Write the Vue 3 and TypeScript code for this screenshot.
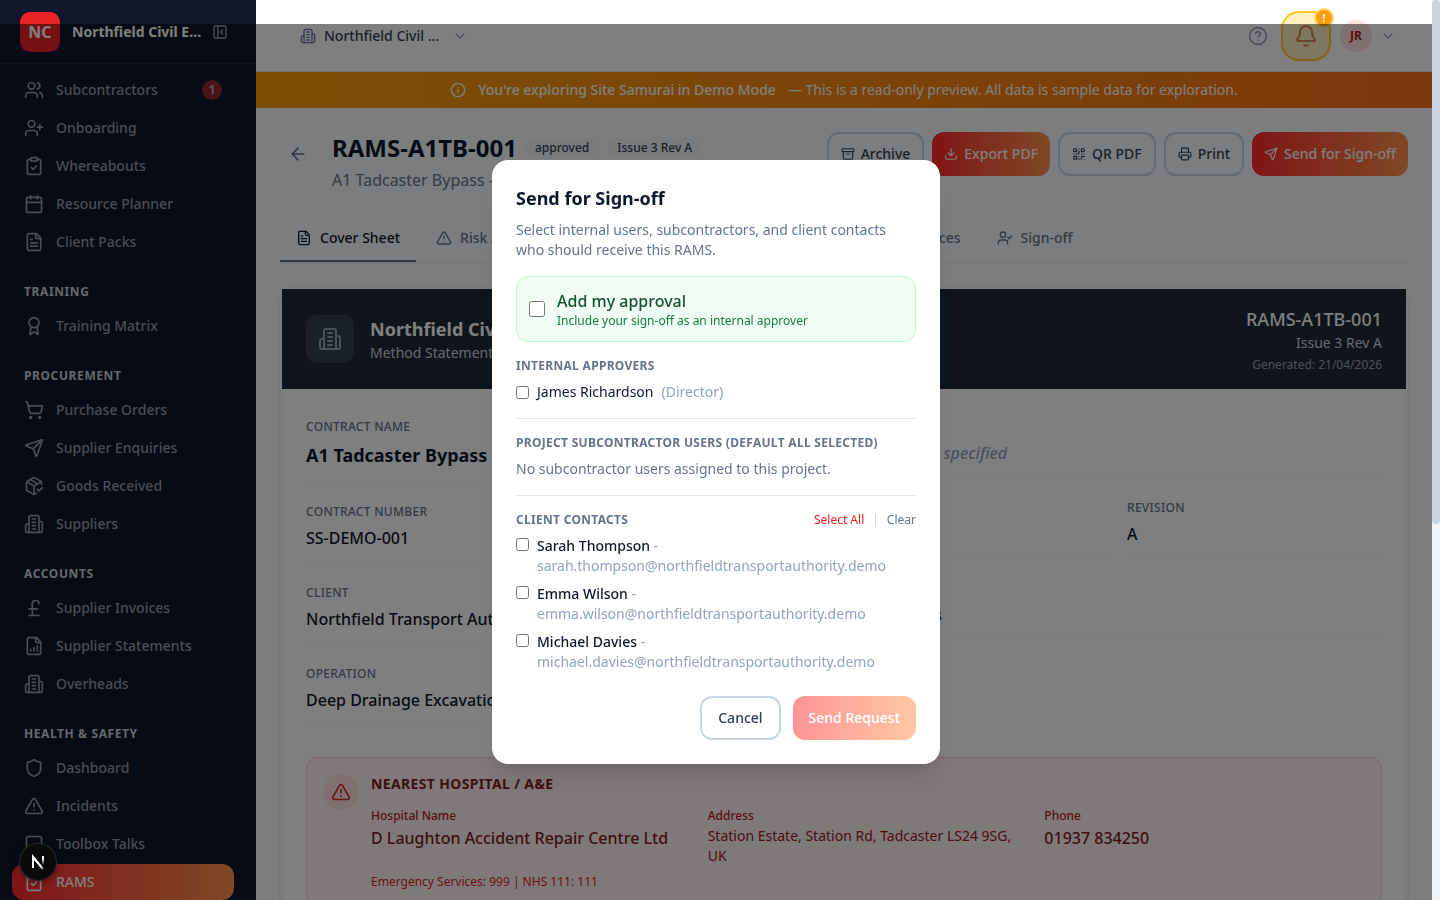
<script setup lang="ts">
import { ref } from 'vue'

const file = '<path d="M15 2H6a2 2 0 0 0-2 2v16a2 2 0 0 0 2 2h12a2 2 0 0 0 2-2V7Z"/><path d="M14 2v4a2 2 0 0 0 2 2h4"/>'
const person = '<path d="M16 21v-2a4 4 0 0 0-4-4H6a4 4 0 0 0-4 4v2"/><circle cx="9" cy="7" r="4"/>'

const icons: Record<string, string> = {
  users: person + '<path d="M22 21v-2a4 4 0 0 0-3-3.87"/><path d="M16 3.13a4 4 0 0 1 0 7.75"/>',
  userPlus: person + '<path d="M19 8v6M22 11h-6"/>',
  userCheck: person + '<path d="m16 11 2 2 4-4"/>',
  clipboard: '<rect x="8" y="2" width="8" height="4" rx="1"/><path d="M16 4h2a2 2 0 0 1 2 2v14a2 2 0 0 1-2 2H6a2 2 0 0 1-2-2V6a2 2 0 0 1 2-2h2"/><path d="m9 14 2 2 4-4"/>',
  calendar: '<path d="M8 2v4M16 2v4"/><rect x="3" y="4" width="18" height="18" rx="2"/><path d="M3 10h18"/>',
  fileText: file + '<path d="M10 9H8M16 13H8M16 17H8"/>',
  fileChart: file + '<path d="M8 18v-2M12 18v-4M16 18v-6"/>',
  award: '<path d="m15.477 12.89 1.515 8.526a.5.5 0 0 1-.81.47l-3.58-2.687a1 1 0 0 0-1.197 0l-3.586 2.686a.5.5 0 0 1-.81-.469l1.514-8.526"/><circle cx="12" cy="8" r="6"/>',
  cart: '<circle cx="8" cy="21" r="1"/><circle cx="19" cy="21" r="1"/><path d="M2.05 2.05h2l2.66 12.42a2 2 0 0 0 2 1.58h9.78a2 2 0 0 0 1.95-1.57l1.65-7.43H5.12"/>',
  send: '<path d="M14.536 21.686a.5.5 0 0 0 .937-.024l6.5-19a.496.496 0 0 0-.635-.635l-19 6.5a.5.5 0 0 0-.024.937l7.93 3.18a2 2 0 0 1 1.112 1.11z"/><path d="m21.854 2.147-10.94 10.939"/>',
  package: '<path d="m16 16 2 2 4-4"/><path d="M21 10V8a2 2 0 0 0-1-1.73l-7-4a2 2 0 0 0-2 0l-7 4A2 2 0 0 0 3 8v8a2 2 0 0 0 1 1.73l7 4a2 2 0 0 0 2 0l2-1.14"/><path d="m7.5 4.27 9 5.15"/><path d="M3.29 7 12 12l8.71-5M12 22V12"/>',
  building: '<path d="M6 22V4a2 2 0 0 1 2-2h8a2 2 0 0 1 2 2v18Z"/><path d="M6 12H4a2 2 0 0 0-2 2v6a2 2 0 0 0 2 2h2"/><path d="M18 9h2a2 2 0 0 1 2 2v9a2 2 0 0 1-2 2h-2"/><path d="M10 6h4M10 10h4M10 14h4M10 18h4"/>',
  pound: '<path d="M18 7c0-5.333-8-5.333-8 0"/><path d="M10 7v14M6 21h12M6 13h10"/>',
  shield: '<path d="M20 13c0 5-3.5 7.5-7.66 8.95a1 1 0 0 1-.67-.01C7.5 20.5 4 18 4 13V6a1 1 0 0 1 1-1c2 0 4.5-1.2 6.24-2.72a1.17 1.17 0 0 1 1.52 0C14.51 3.81 17 5 19 5a1 1 0 0 1 1 1z"/>',
  alert: '<path d="m21.73 18-8-14a2 2 0 0 0-3.48 0l-8 14A2 2 0 0 0 4 21h16a2 2 0 0 0 1.73-3"/><path d="M12 9v4M12 17h.01"/>',
  message: '<path d="M21 15a2 2 0 0 1-2 2H7l-4 4V5a2 2 0 0 1 2-2h14a2 2 0 0 1 2 2z"/>',
  panel: '<rect x="3" y="3" width="18" height="18" rx="2"/><path d="M9 3v18M16 15l-3-3 3-3"/>',
  chevron: '<path d="m6 9 6 6 6-6"/>',
  help: '<circle cx="12" cy="12" r="10"/><path d="M9.09 9a3 3 0 0 1 5.83 1c0 2-3 3-3 3M12 17h.01"/>',
  bell: '<path d="M10.268 21a2 2 0 0 0 3.464 0"/><path d="M3.262 15.326A1 1 0 0 0 4 17h16a1 1 0 0 0 .74-1.673C19.41 13.956 18 12.499 18 8A6 6 0 0 0 6 8c0 4.499-1.411 5.956-2.738 7.326"/>',
  info: '<circle cx="12" cy="12" r="10"/><path d="M12 16v-4M12 8h.01"/>',
  back: '<path d="m12 19-7-7 7-7M19 12H5"/>',
  archive: '<rect x="2" y="3" width="20" height="5" rx="1"/><path d="M4 8v11a2 2 0 0 0 2 2h12a2 2 0 0 0 2-2V8M10 12h4"/>',
  download: '<path d="M21 15v4a2 2 0 0 1-2 2H5a2 2 0 0 1-2-2v-4M7 10l5 5 5-5M12 15V3"/>',
  qr: '<rect x="3" y="3" width="5" height="5" rx="1"/><rect x="16" y="3" width="5" height="5" rx="1"/><rect x="3" y="16" width="5" height="5" rx="1"/><path d="M21 16h-3a2 2 0 0 0-2 2v3M21 21v.01M12 7v3a2 2 0 0 1-2 2H7M3 12h.01M12 3h.01M12 16v.01M16 12h1M21 12v.01M12 21v-1"/>',
  printer: '<path d="M6 18H4a2 2 0 0 1-2-2v-5a2 2 0 0 1 2-2h16a2 2 0 0 1 2 2v5a2 2 0 0 1-2 2h-2"/><path d="M6 9V3a1 1 0 0 1 1-1h10a1 1 0 0 1 1 1v6"/><rect x="6" y="14" width="12" height="8" rx="1"/>',
}

interface NavItem { label: string; icon: string; count?: number; active?: boolean }
interface NavGroup { title?: string; items: NavItem[] }

const groups: NavGroup[] = [
  {
    items: [
      { label: 'Subcontractors', icon: 'users', count: 1 },
      { label: 'Onboarding', icon: 'userPlus' },
      { label: 'Whereabouts', icon: 'clipboard' },
      { label: 'Resource Planner', icon: 'calendar' },
      { label: 'Client Packs', icon: 'fileText' },
    ],
  },
  { title: 'Training', items: [{ label: 'Training Matrix', icon: 'award' }] },
  {
    title: 'Procurement',
    items: [
      { label: 'Purchase Orders', icon: 'cart' },
      { label: 'Supplier Enquiries', icon: 'send' },
      { label: 'Goods Received', icon: 'package' },
      { label: 'Suppliers', icon: 'building' },
    ],
  },
  {
    title: 'Accounts',
    items: [
      { label: 'Supplier Invoices', icon: 'pound' },
      { label: 'Supplier Statements', icon: 'fileChart' },
      { label: 'Overheads', icon: 'building' },
    ],
  },
  {
    title: 'Health & Safety',
    items: [
      { label: 'Dashboard', icon: 'shield' },
      { label: 'Incidents', icon: 'alert' },
      { label: 'Toolbox Talks', icon: 'message' },
      { label: 'RAMS', icon: 'clipboard', active: true },
    ],
  },
]

const actions = [
  { label: 'Archive', icon: 'archive', primary: false },
  { label: 'Export PDF', icon: 'download', primary: true },
  { label: 'QR PDF', icon: 'qr', primary: false },
  { label: 'Print', icon: 'printer', primary: false },
  { label: 'Send for Sign-off', icon: 'send', primary: true },
]

const tabs = [
  { label: 'Cover Sheet', icon: 'fileText', active: true },
  { label: 'Risk Assessments', icon: 'alert' },
  { label: 'Method', icon: 'clipboard' },
  { label: 'Equipment', icon: 'fileChart' },
  { label: 'Appendices', icon: 'fileText' },
  { label: 'Sign-off', icon: 'userCheck' },
]

const contacts = ref([
  { name: 'Sarah Thompson', email: 'sarah.thompson@northfieldtransportauthority.demo', picked: false },
  { name: 'Emma Wilson', email: 'emma.wilson@northfieldtransportauthority.demo', picked: false },
  { name: 'Michael Davies', email: 'michael.davies@northfieldtransportauthority.demo', picked: false },
])
const addApproval = ref(false)
const director = ref(false)

function pickAll(value: boolean) {
  contacts.value.forEach((c) => { c.picked = value })
}
</script>

<template>
  <div class="shell">
    <aside class="sidebar">
      <div class="brand">
        <span class="brand-logo">NC</span>
        <span class="brand-name">Northfield Civil Engineering</span>
        <button class="plain" aria-label="Collapse sidebar">
          <svg class="icon i16 slate" viewBox="0 0 24 24" v-html="icons.panel" />
        </button>
      </div>
      <nav class="nav">
        <section v-for="(group, i) in groups" :key="i" class="nav-group">
          <h2 v-if="group.title" class="nav-title">{{ group.title }}</h2>
          <a v-for="item in group.items" :key="item.label" href="#" class="nav-item" :class="{ active: item.active }">
            <svg class="icon i20" viewBox="0 0 24 24" v-html="icons[item.icon]" />
            <span>{{ item.label }}</span>
            <span v-if="item.count" class="nav-count">{{ item.count }}</span>
          </a>
        </section>
      </nav>
    </aside>

    <div class="page">
      <header class="topbar">
        <button class="plain company">
          <svg class="icon i16 muted" viewBox="0 0 24 24" v-html="icons.building" />
          <span class="company-name">Northfield Civil Engineering</span>
          <svg class="icon i16 faint" viewBox="0 0 24 24" v-html="icons.chevron" />
        </button>
        <div class="topbar-end">
          <button class="plain help" aria-label="Help"><svg class="icon i20 faint" viewBox="0 0 24 24" v-html="icons.help" /></button>
          <button class="bell" aria-label="Notifications">
            <svg class="icon i24" viewBox="0 0 24 24" v-html="icons.bell" />
            <span class="bell-badge">!</span>
          </button>
          <button class="plain user">
            <span class="avatar">JR</span>
            <svg class="icon i16 faint" viewBox="0 0 24 24" v-html="icons.chevron" />
          </button>
        </div>
      </header>

      <div class="banner">
        <svg class="icon i16" viewBox="0 0 24 24" v-html="icons.info" />
        <strong>You're exploring Site Samurai in Demo Mode</strong>
        <span>— This is a read-only preview. All data is sample data for exploration.</span>
      </div>

      <main class="main">
        <div class="heading">
          <button class="plain back" aria-label="Back"><svg class="icon i20" viewBox="0 0 24 24" v-html="icons.back" /></button>
          <div class="heading-text">
            <div class="heading-row">
              <h1>RAMS-A1TB-001</h1>
              <span class="pill">approved</span>
              <span class="pill">Issue 3 Rev A</span>
            </div>
            <p>A1 Tadcaster Bypass - Deep Drainage</p>
          </div>
          <div class="actions">
            <button v-for="a in actions" :key="a.label" class="btn" :class="a.primary ? 'primary' : 'outline'">
              <svg class="icon i14" viewBox="0 0 24 24" v-html="icons[a.icon]" />{{ a.label }}
            </button>
          </div>
        </div>

        <div class="tabs" role="tablist">
          <button v-for="t in tabs" :key="t.label" role="tab" class="tab" :class="{ active: t.active }">
            <svg class="icon i16" viewBox="0 0 24 24" v-html="icons[t.icon]" />{{ t.label }}
          </button>
        </div>

        <article class="sheet">
          <header class="sheet-head">
            <span class="sheet-logo"><svg class="icon i24" viewBox="0 0 24 24" v-html="icons.building" /></span>
            <div class="sheet-name">
              <h2>Northfield Civil Engineering</h2>
              <p>Method Statement</p>
            </div>
            <div class="sheet-ref">
              <p class="ref-code">RAMS-A1TB-001</p>
              <p class="ref-issue">Issue 3 Rev A</p>
              <p class="ref-date">Generated: 21/04/2026</p>
            </div>
          </header>

          <div class="sheet-body">
            <div class="columns">
              <dl class="stack">
                <div class="field"><dt>Contract Name</dt><dd class="large">A1 Tadcaster Bypass</dd></div>
                <div class="field"><dt>Contract Number</dt><dd>SS-DEMO-001</dd></div>
                <div class="field"><dt>Client</dt><dd>Northfield Transport Authority</dd></div>
                <div class="field"><dt>Operation</dt><dd>Deep Drainage Excavation</dd></div>
              </dl>
              <dl class="stack pair">
                <div class="field wide"><dt>Site Address</dt><dd class="empty">No location specified</dd></div>
                <div class="field"><dt>Issue</dt><dd>3</dd></div>
                <div class="field"><dt>Revision</dt><dd>A</dd></div>
                <div class="field wide"><dt>Duration</dt><dd>2 - 3 Weeks</dd></div>
              </dl>
            </div>

            <section class="hospital">
              <span class="hospital-icon"><svg class="icon i20" viewBox="0 0 24 24" v-html="icons.alert" /></span>
              <div class="hospital-text">
                <h3>Nearest Hospital / A&amp;E</h3>
                <dl class="hospital-grid">
                  <div><dt>Hospital Name</dt><dd>D Laughton Accident Repair Centre Ltd</dd></div>
                  <div><dt>Address</dt><dd class="address">Station Estate, Station Rd, Tadcaster LS24 9SG, UK</dd></div>
                  <div><dt>Phone</dt><dd>01937 834250</dd></div>
                </dl>
                <p>Emergency Services: 999 | NHS 111: 111</p>
              </div>
            </section>
          </div>
        </article>
      </main>
    </div>

    <div class="scrollbar" aria-hidden="true"><div class="thumb" /></div>

    <div class="overlay">
      <form class="dialog" role="dialog" aria-labelledby="dialog-title" @submit.prevent>
        <h2 id="dialog-title">Send for Sign-off</h2>
        <p class="dialog-intro">Select internal users, subcontractors, and client contacts who should receive this RAMS.</p>

        <label class="approval">
          <input v-model="addApproval" type="checkbox" class="big-check">
          <span>
            <span class="approval-title">Add my approval</span>
            <span class="approval-note">Include your sign-off as an internal approver</span>
          </span>
        </label>

        <section class="block">
          <h3>Internal Approvers</h3>
          <label class="row middle">
            <input v-model="director" type="checkbox">
            <span>James Richardson</span>
            <span class="soft">(Director)</span>
          </label>
        </section>

        <section class="block ruled">
          <h3>Project Subcontractor Users (default all selected)</h3>
          <p>No subcontractor users assigned to this project.</p>
        </section>

        <section class="block ruled">
          <div class="block-head">
            <h3>Client Contacts</h3>
            <div class="links">
              <button type="button" class="plain select-all" @click="pickAll(true)">Select All</button>
              <span class="bar">|</span>
              <button type="button" class="plain clear" @click="pickAll(false)">Clear</button>
            </div>
          </div>
          <label v-for="c in contacts" :key="c.email" class="row">
            <input v-model="c.picked" type="checkbox">
            <span><span class="contact">{{ c.name }}</span> <span class="soft">- {{ c.email }}</span></span>
          </label>
        </section>

        <div class="dialog-foot">
          <button type="button" class="btn outline roomy">Cancel</button>
          <button type="submit" class="btn primary roomy" disabled>Send Request</button>
        </div>
      </form>
    </div>

    <button class="dev-badge" aria-label="Open developer tools">
      <svg viewBox="0 0 36 36" width="36" height="36">
        <defs>
          <linearGradient id="dev-diagonal" x1="20" y1="20" x2="25" y2="27" gradientUnits="userSpaceOnUse">
            <stop offset="0.3" stop-color="#fff" /><stop offset="1" stop-color="#fff" stop-opacity="0" />
          </linearGradient>
          <linearGradient id="dev-stem" x1="0" y1="12" x2="0" y2="21" gradientUnits="userSpaceOnUse">
            <stop offset="0.3" stop-color="#fff" /><stop offset="1" stop-color="#fff" stop-opacity="0" />
          </linearGradient>
        </defs>
        <path d="M13 24V13l10 12" fill="none" stroke="url(#dev-diagonal)" stroke-width="2" />
        <path d="M13 24V13l5 6" fill="none" stroke="#fff" stroke-width="2" />
        <path d="M23 12v10" fill="none" stroke="url(#dev-stem)" stroke-width="2" />
      </svg>
    </button>
  </div>
</template>

<style>
body { margin: 0; overflow: hidden; }
</style>

<style scoped>
* { box-sizing: border-box; }
h1, h2, h3, p, dl, dd { margin: 0; }
button, input { font: inherit; }

.shell {
  display: flex;
  height: 100vh;
  overflow: hidden;
  font-family: "Noto Sans", sans-serif;
  font-size: 14px;
  line-height: 20px;
  color: #0f172a;
  background: #f8fafc;
}

.icon { flex: none; fill: none; stroke: currentColor; stroke-width: 2; stroke-linecap: round; stroke-linejoin: round; }
.i14 { width: 14px; height: 14px; }
.i16 { width: 16px; height: 16px; }
.i20 { width: 20px; height: 20px; }
.i24 { width: 24px; height: 24px; }
.muted { color: #64748b; }
.faint { color: #94a3b8; }
.slate { color: #94a3b8; }
.plain { display: flex; align-items: center; padding: 0; border: 0; background: none; color: inherit; cursor: pointer; }

/* Sidebar */
.sidebar { display: flex; flex: none; flex-direction: column; width: 256px; overflow: hidden; background: #0f172a; color: #949ba9; }
.brand { display: flex; flex: none; align-items: center; gap: 4px; height: 64px; padding: 0 28px 0 20px; border-bottom: 1px solid #1e293b; }
.brand-logo { display: grid; flex: none; place-items: center; width: 40px; height: 40px; margin-right: 8px; border-radius: 10px; background: #e92424; color: #fff; font-size: 16px; font-weight: 700; }
.brand-name { flex: 1; overflow: hidden; color: #fff; font-weight: 700; text-overflow: ellipsis; white-space: nowrap; }
.nav { display: flex; flex-direction: column; gap: 24px; padding: 8px 22px 0 12px; }
.nav-group { display: flex; flex-direction: column; gap: 2px; }
.nav-title { margin-bottom: 6px; padding: 0 12px; color: #cbd0d8; font-size: 12px; font-weight: 700; line-height: 16px; letter-spacing: 0.05em; text-transform: uppercase; }
.nav-item { display: flex; align-items: center; gap: 12px; height: 36px; padding: 0 12px; border-radius: 12px; color: inherit; font-weight: 500; text-decoration: none; }
.nav-item.active { background: linear-gradient(90deg, #ff2a2f, #ff914d); color: #fff; }
.nav-count { display: grid; place-items: center; width: 20px; height: 20px; margin-left: auto; border-radius: 10px; background: #90282f; color: #dfa0a4; font-size: 12px; font-weight: 700; }

/* Top bar */
.page { display: flex; flex: 1; flex-direction: column; min-width: 0; }
.topbar { display: flex; flex: none; align-items: center; justify-content: space-between; height: 72px; padding: 0 36px 0 44px; border-bottom: 1px solid #e2e8f0; background: #fff; }
.company { gap: 8px; color: #334155; font-weight: 500; }
.company-name { width: 120px; overflow: hidden; text-align: left; text-overflow: ellipsis; white-space: nowrap; }
.topbar-end { display: flex; align-items: center; }
.help { margin-right: 13px; }
.bell { position: relative; display: grid; place-items: center; width: 50px; height: 50px; margin-right: 9px; padding: 0; border: 2px solid #fcc828; border-radius: 18px; background: #fef1c0; color: #d08652; box-shadow: inset 0 0 0 1px #fff3c4; }
.bell-badge { position: absolute; top: -3px; right: -3px; display: grid; place-items: center; width: 16px; height: 16px; border-radius: 8px; background: #fb9d0a; box-shadow: 0 0 0 2px #fcd66b; color: #fff; font-size: 10px; font-weight: 700; line-height: 16px; }
.user { gap: 8px; }
.avatar { display: grid; place-items: center; width: 32px; height: 32px; border-radius: 16px; background: #fee2e2; color: #b91c1c; font-size: 12px; font-weight: 700; }

/* Demo banner */
.banner { display: flex; flex: none; align-items: center; justify-content: center; gap: 12px; height: 36px; background: linear-gradient(90deg, #f59e0b, #f97316); color: #fff; }
.banner strong { font-weight: 500; }

/* Page heading */
.main { display: flex; flex-direction: column; padding: 24px; }
.heading { display: flex; gap: 16px; align-items: flex-start; }
.back { justify-content: center; width: 36px; height: 44px; color: #64748b; }
.heading-text { flex: 1; }
.heading-row { display: flex; align-items: center; gap: 8px; white-space: nowrap; }
h1 { font-size: 24px; font-weight: 700; line-height: 32px; }
.pill { padding: 2px 10px; border-radius: 10px; background: #f1f5f9; color: #334155; font-size: 12px; font-weight: 500; line-height: 16px; }
.heading-text p { margin-top: 4px; color: #64748b; font-size: 16px; line-height: 24px; }
.actions { display: flex; gap: 8px; }
.btn { display: flex; align-items: center; gap: 6px; height: 44px; padding: 0 12px; border: 0; border-radius: 12px; font-weight: 500; white-space: nowrap; cursor: pointer; }
.btn.outline { border: 2px solid #cbd5e1; background: transparent; color: #334155; }
.btn.primary { background: linear-gradient(90deg, #ff2c2c, #ff914d); color: #fff; }
.btn.roomy { padding: 0 16px; }
.btn:disabled { opacity: 0.5; cursor: default; }

/* Tabs */
.tabs { display: flex; gap: 4px; margin-top: 24px; border-bottom: 1px solid #e2e8f0; }
.tab { display: flex; align-items: center; gap: 8px; height: 46px; padding: 0 16px; border: 0; border-bottom: 2px solid transparent; background: none; color: #64748b; font-weight: 500; white-space: nowrap; cursor: pointer; }
.tab.active { border-bottom-color: #64748b; color: #0f172a; }

/* Cover sheet */
.sheet { margin-top: 24px; border: 2px solid #f5f8fb; border-radius: 16px; background: #fff; box-shadow: 0 1px 4px rgba(15, 23, 42, 0.12); }
.sheet-head { display: flex; align-items: center; gap: 16px; height: 100px; padding: 0 24px; background: #1e293b; color: #fff; }
.sheet-logo { display: grid; flex: none; place-items: center; width: 48px; height: 48px; border-radius: 10px; background: #334155; color: #94a3b8; }
.sheet-name { flex: 1; }
.sheet-name h2 { font-size: 18px; font-weight: 700; line-height: 28px; }
.sheet-name p, .ref-issue { color: #cbd5e1; }
.sheet-ref { text-align: right; }
.ref-code { font-size: 18px; font-weight: 500; line-height: 28px; }
.ref-date { margin-top: 4px; color: #94a3b8; font-size: 12px; line-height: 16px; }
.sheet-body { padding: 30px 24px 24px; }
.columns { display: grid; grid-template-columns: 1fr 1fr; gap: 24px; align-items: start; }
.stack { display: grid; gap: 22px 16px; }
.pair { grid-template-columns: 1fr 1fr; }
.wide { grid-column: 1 / -1; }
.field { padding-bottom: 12px; border-bottom: 1px solid #f1f5f9; }
.field dt { color: #64748b; font-size: 12px; font-weight: 500; line-height: 16px; letter-spacing: 0.025em; text-transform: uppercase; }
.field dd { margin-top: 6px; font-size: 16px; font-weight: 500; line-height: 24px; }
.field .large { font-size: 18px; font-weight: 700; line-height: 28px; }
.field .empty { color: #94a3b8; font-style: italic; }

.hospital { display: flex; gap: 12px; margin-top: 32px; padding: 16px; border: 1px solid #fecaca; border-radius: 12px; background: #fef2f2; }
.hospital-icon { display: grid; flex: none; place-items: center; width: 36px; height: 36px; border-radius: 18px; background: #fee2e2; color: #dc2626; }
.hospital-text { flex: 1; color: #7f1d1d; }
.hospital h3 { font-size: 14px; font-weight: 700; letter-spacing: 0.025em; text-transform: uppercase; }
.hospital-grid { display: grid; grid-template-columns: repeat(3, 1fr); gap: 16px; margin-top: 14px; }
.hospital-grid dt { color: #b91c1c; font-size: 12px; font-weight: 500; line-height: 16px; }
.hospital-grid dd { margin-top: 2px; font-size: 16px; font-weight: 500; line-height: 24px; }
.hospital-grid .address { color: #991b1b; font-size: 14px; font-weight: 400; line-height: 20px; }
.hospital-text p { margin-top: 8px; color: #dc2626; font-size: 12px; line-height: 16px; }

/* Page scrollbar */
.scrollbar { flex: none; width: 8px; background: #f1f5f9; }
.thumb { height: 58.2%; border-radius: 4px; background: #cbd5e1; }

/* Dialog */
.overlay { position: fixed; inset: 24px 8px 0 0; display: grid; place-items: center; background: rgba(0, 0, 0, 0.5); }
.dialog { width: 100%; max-width: 448px; padding: 24px; border-radius: 16px; background: #fff; box-shadow: 0 20px 25px -5px rgba(0, 0, 0, 0.1), 0 8px 10px -6px rgba(0, 0, 0, 0.1); }
.dialog h2 { font-size: 18px; font-weight: 700; line-height: 28px; }
.dialog-intro { margin-top: 8px; color: #64748b; }
.approval { display: flex; align-items: center; gap: 12px; margin-top: 16px; padding: 12px; border: 1px solid #bbf7d0; border-radius: 12px; background: #f0fdf4; cursor: pointer; }
.dialog input { flex: none; width: 13px; height: 13px; margin: 0; }
.dialog .big-check { width: 16px; height: 16px; }
.approval-title { display: block; color: #14532d; font-size: 16px; font-weight: 500; line-height: 24px; }
.approval-note { display: block; color: #15803d; font-size: 12px; line-height: 16px; }
.block { margin-top: 16px; color: #64748b; }
.block h3 { color: #64748b; font-size: 12px; font-weight: 700; line-height: 16px; letter-spacing: 0.025em; text-transform: uppercase; }
.block p { margin-top: 8px; }
.ruled { padding-top: 16px; border-top: 1px solid #e5e7eb; }
.row { display: flex; gap: 8px; margin-top: 8px; color: #0f172a; cursor: pointer; }
.middle { align-items: center; }
.dialog .row:not(.middle) input { margin-top: 2px; }
.soft { color: #94a3b8; }
.contact { font-weight: 500; }
.block-head { display: flex; align-items: center; justify-content: space-between; }
.links { display: flex; gap: 8px; font-size: 12px; line-height: 16px; }
.select-all { color: #e61e1e; }
.clear { color: #64748b; }
.bar { color: #cbd5e1; }
.dialog-foot { display: flex; justify-content: flex-end; gap: 12px; margin-top: 24px; }

.dev-badge { position: fixed; bottom: 20px; left: 20px; width: 36px; height: 36px; padding: 0; border: 0; border-radius: 18px; background: #0a0a0a; box-shadow: 0 0 0 1px #2d2a2a, 0 2px 8px rgba(0, 0, 0, 0.4); cursor: pointer; }
</style>
